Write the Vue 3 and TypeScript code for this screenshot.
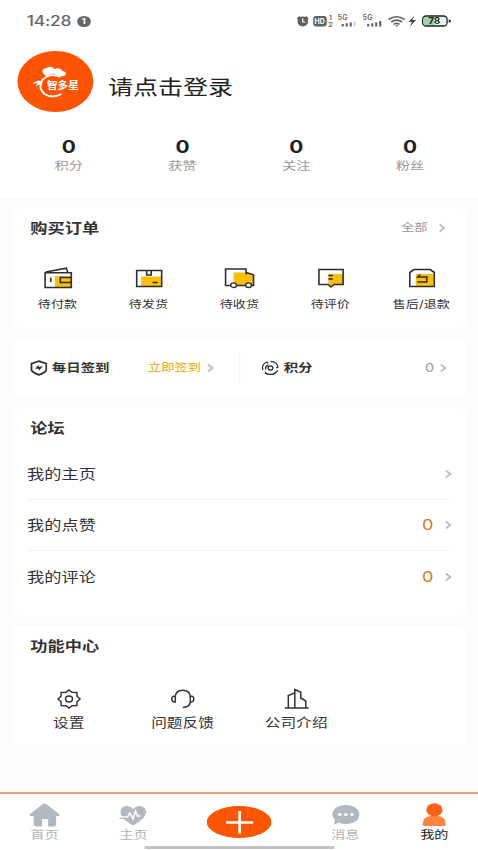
<script setup lang="ts">
interface Item { label: string; icon: string }

const stats: string[] = ['积分', '获赞', '关注', '粉丝']
const orders: Item[] = [
  { label: '待付款', icon: 'wallet' },
  { label: '待发货', icon: 'box' },
  { label: '待收货', icon: 'truck' },
  { label: '待评价', icon: 'comment' },
  { label: '售后/退款', icon: 'refund' },
]
const forum: { label: string; count?: number }[] = [
  { label: '我的主页' },
  { label: '我的点赞', count: 0 },
  { label: '我的评论', count: 0 },
]
const features: Item[] = [
  { label: '设置', icon: 'gear' },
  { label: '问题反馈', icon: 'headset' },
  { label: '公司介绍', icon: 'building' },
]
</script>

<template>
  <div class="screen">
    <header class="top">
      <div class="status">
        <span class="time">14:28</span>
        <span class="note">1</span>
        <div class="sys">
          <svg class="s-left" viewBox="0 0 31 16" preserveAspectRatio="none">
            <g fill="#606060">
              <ellipse cx="6.5" cy="8.5" rx="5.3" ry="5" />
              <path d="M.5 5.500 3 3l1.500 1.500L2 7zM12.500 5.500 10 3 8.500 4.500 11 7z" />
              <rect x="17" y="3" width="13.500" height="10.500" rx="3" />
            </g>
            <path d="M6.500 5.500v3.500h2.500" fill="none" stroke="#fff" stroke-width="1.200" />
            <text x="18.300" y="11.300" class="hd">HD</text>
          </svg>
          <div class="sims"><span>1</span><span>2</span></div>
          <svg class="s-right" viewBox="37 0 119 16" preserveAspectRatio="none">
            <text x="41" y="7" class="mini">5G</text>
            <text x="66" y="7" class="mini">5G</text>
            <g fill="#666">
              <path d="M45 11h2.200v2.500H45zM49 10.300h2.200v3.200H49zM53 9.500h2.200v4H53z" />
              <path d="M70.500 11h2.200v2.500h-2.200zM74.500 10.300h2.200v3.200h-2.200zM78.500 9.500h2.200v4h-2.200zM82.500 8h2.200v5.500h-2.200z" />
              <path d="M57 8h2v5.500h-2z" fill="#d8d8d8" />
            </g>
            <path d="M92 6.500q8-5.500 16 0M94.500 9q5.500-3.800 11 0M97 11.300q3-2 6 0" fill="none" stroke="#666" stroke-width="1.600" />
            <path d="M98.500 11.800h3.500L100.300 14z" fill="#666" />
            <path d="m118 2.500-6 6.500h3.500L113 14l6.500-7h-3.800z" fill="#444" />
            <rect x="126" y="3" width="24.500" height="10" rx="3.500" fill="#e5f3e8" stroke="#222" stroke-width="1.300" />
            <path d="M129 4h9v8h-9q-2 0-2-2V6q0-2 2-2z" fill="#9bd5a8" />
            <path d="M152 6.500q2.500 0 2.500 1.500T152 9.500z" fill="#333" />
            <text x="132" y="11.300" class="battery">78</text>
          </svg>
        </div>
      </div>

      <div class="profile">
        <div class="avatar">
          <svg viewBox="0 0 76 61" preserveAspectRatio="none">
            <path d="M26 23q-3-5 3-6 5-3 8 1 6-2 8 2 6 1 2 5-5 1-8-1-5-3-9 1-2 0-4-2z" fill="#fff" />
            <path d="M43 26Q32 21 25 29q-5 8 2 14 8 5 17 0" fill="none" stroke="#fff" stroke-width="1.800" />
            <path d="M25 31q-4-4-10 2l5-1-2 4q4-4 6-1z" fill="#fff" />
            <text x="29.500" y="38.300" class="brand" textLength="32" lengthAdjust="spacingAndGlyphs">智多星</text>
          </svg>
        </div>
        <h1>请点击登录</h1>
      </div>

      <div class="stats">
        <div v-for="s in stats" :key="s" class="stat">
          <b>0</b><span>{{ s }}</span>
        </div>
      </div>
    </header>

    <main>
      <section class="card orders">
        <div class="head">
          <h2>购买订单</h2>
          <span class="all">全部</span>
          <svg class="chev" viewBox="0 0 8 10" preserveAspectRatio="none"><path d="m1.500 1.500 4.500 3.500-4.500 3.500" /></svg>
        </div>
        <div class="grid">
          <div v-for="o in orders" :key="o.icon" class="order">
            <svg class="oicon" viewBox="0 0 32 24" preserveAspectRatio="none">
              <template v-if="o.icon === 'wallet'">
                <path class="y" d="M12.500 10H29v11.500H12.500z" />
                <path class="l" d="M2.800 6.700h26.200v14.800H2.800zM3.500 6 24 2.200l1.500 4.300M8.500 11.500v4.500M29 11.500H18v5h11" />
              </template>
              <template v-else-if="o.icon === 'box'">
                <path class="y" d="M8 10.500h20V20H8z" />
                <path class="l" d="M3.500 4.500h25V20.500h-25zM13.500 4.500V9h4.500V4.500M19.500 16.500h5" />
              </template>
              <template v-else-if="o.icon === 'truck'">
                <path class="y" d="M9.500 6.500h13.500l6.500 2v11.500h-20z" />
                <path class="l" d="M1.500 3h20.500v16.500H1.500zM22 6.500l7.500 2.300v10.700H22M22 8.500v3" />
                <path d="M21 8.500h2v10.200h-2z" class="fill" />
                <ellipse class="w" cx="9.500" cy="19.200" rx="2.900" ry="2.300" />
                <ellipse class="w" cx="24.500" cy="19.200" rx="2.900" ry="2.300" />
              </template>
              <template v-else-if="o.icon === 'comment'">
                <path class="y" d="M13.500 8H28v10.500h-9L16 21l-2.500-2z" />
                <path class="l" d="M4 3.500h24.200v15H19L16 21l-3-2.500H4zM13.500 9.500H18M13.500 13H18" />
              </template>
              <template v-else>
                <path class="y" d="M10 8h18v12.500H10z" />
                <path class="l" d="M4 20.500V6.500L8 3.500h16.500l4 3v14zM14.500 8.500 12 11h9v5h-9.500" />
              </template>
            </svg>
            <span>{{ o.label }}</span>
          </div>
        </div>
      </section>

      <section class="card sign">
        <div class="half first">
          <svg class="sicon" viewBox="0 0 18 16" preserveAspectRatio="none">
            <path d="M9 1.200 16.400 3.700v6.500Q14.500 13 9 14.800 3.500 13 1.600 10.200V3.700z" />
            <path d="M5 8.500 9 5v2l4-1-4 5V9z" fill="#333" />
          </svg>
          <b>每日签到</b>
          <span class="now">立即签到</span>
          <svg class="chev" viewBox="0 0 8 10" preserveAspectRatio="none"><path d="m1.500 1.500 4.500 3.500-4.500 3.500" /></svg>
        </div>
        <div class="half second">
          <svg class="sicon thin" viewBox="0 0 18 16" preserveAspectRatio="none">
            <ellipse cx="9" cy="8" rx="2.400" ry="2" />
            <path d="M1.500 10Q-.3 4.500 5.500 2l1 1.300M9 1.300q7 .5 7.500 6L14.500 8M16.300 10.500Q12 16.500 4 13.300l.5-1.500M4.300 9.500Q3.500 6 7 4.800" />
          </svg>
          <b>积分</b>
          <span class="points">0</span>
          <svg class="chev" viewBox="0 0 8 10" preserveAspectRatio="none"><path d="m1.500 1.500 4.500 3.500-4.500 3.500" /></svg>
        </div>
      </section>

      <section class="card forum">
        <div class="head"><h2>论坛</h2></div>
        <div v-for="f in forum" :key="f.label" class="row">
          <span class="name">{{ f.label }}</span>
          <span v-if="f.count !== undefined" class="count">{{ f.count }}</span>
          <svg class="chev" viewBox="0 0 8 10" preserveAspectRatio="none"><path d="m1.500 1.500 4.500 3.500-4.500 3.500" /></svg>
        </div>
      </section>

      <section class="card center">
        <div class="head"><h2>功能中心</h2></div>
        <div class="features">
          <div v-for="f in features" :key="f.icon" class="feature">
            <svg class="ficon" viewBox="0 0 26 22" preserveAspectRatio="none">
              <template v-if="f.icon === 'gear'">
                <path d="M13 2 16 4.300 20.800 4.500 21 8.200 24 11l-3 2.800-.2 3.700-4.800.2L13 20l-3-2.300-4.800-.2L5 13.800 2 11l3-2.800.2-3.700 4.800-.2z" />
                <ellipse cx="13" cy="11" rx="3.500" ry="2.900" />
              </template>
              <template v-else-if="f.icon === 'headset'">
                <path d="M6 14.500V9.500Q6 2.200 13.500 2.200T21 9.500v5Q20 19.200 13.500 19.500M6 8Q2.500 8 2.500 11T6 14.200M21 8q3.500 0 3.500 3T21 14.200" />
              </template>
              <template v-else>
                <path d="M1 20h24M4.500 20V7.500L11 4.800V20M11 4.800V1.500l6 2.700V10l5 3v7M17 10v1" />
              </template>
            </svg>
            <span>{{ f.label }}</span>
          </div>
        </div>
      </section>
    </main>

    <footer>
      <nav>
        <div class="tab">
          <svg class="ticon" viewBox="0 0 32 24" preserveAspectRatio="none">
            <path d="M16 .5q1 0 2 .8L30.500 11q1.500 2-1.500 2h-1.500v8q0 2.500-3 2.500H19.500V16h-6v7.500H8q-3 0-3-2.500v-8H3q-3 0-1.500-2L14 1.300q1-.8 2-.8z" fill="#b3b9c1" />
          </svg>
          <span>首页</span>
        </div>
        <div class="tab">
          <svg class="ticon" viewBox="0 0 32 24" preserveAspectRatio="none">
            <path d="M16 6Q13 2.500 9 3 3 4 3.500 10q1 6 12.500 12.500Q28 16 29 10q.5-6-6-7-4-.5-7 3z" fill="#b3b9c1" />
            <path d="M3 14h7.500l2.500-4 3 6 2.500-8 2 5h3" fill="none" stroke="#fff" stroke-width="1.500" />
            <path d="M2.500 15.300h7.500" stroke="#b3b9c1" stroke-width="1.200" />
          </svg>
          <span>主页</span>
        </div>
        <div class="tab publish">
          <svg viewBox="0 0 65 32" preserveAspectRatio="none">
            <ellipse cx="32.500" cy="16" rx="32.500" ry="16" fill="#fe5603" />
            <path d="M19.500 16.500h27M33 5v22.500" stroke="#fff" stroke-width="2.600" />
          </svg>
        </div>
        <div class="tab">
          <svg class="ticon" viewBox="0 0 32 24" preserveAspectRatio="none">
            <path d="M16 2c8 0 13.500 4 13.500 9.500S24 21 16 21q-4 0-7-1.200L4 21.500l1-4.500Q2.500 14.500 2.500 11.500C2.500 6 8 2 16 2z" fill="#b3b9c1" />
            <g fill="#fff"><ellipse cx="9.800" cy="11.500" rx="1.800" ry="1.500" /><ellipse cx="16" cy="11.500" rx="1.800" ry="1.500" /><ellipse cx="22.200" cy="11.500" rx="1.800" ry="1.500" /></g>
          </svg>
          <span>消息</span>
        </div>
        <div class="tab active">
          <svg class="ticon" viewBox="0 0 32 24" preserveAspectRatio="none">
            <path d="M4.500 22Q4 14 12 13h8.500Q28 14 27.500 22q0 1-2 1h-19q-2 0-2-1z" fill="#ff8540" />
            <ellipse cx="16.200" cy="6.800" rx="8.200" ry="6.600" fill="#fb6217" />
          </svg>
          <span>我的</span>
        </div>
      </nav>
      <div class="bar"></div>
    </footer>
  </div>
</template>

<style>
body {
  margin: 0;
  overflow: hidden;
  background: #fbfbfb;
}
</style>

<style scoped>
/* The layout is 384 units wide and stretched horizontally to fill the window. */
.screen {
  width: 384px;
  height: 850px;
  transform: scaleX(1.2448);
  transform-origin: 0 0;
  display: flex;
  flex-direction: column;
  overflow: hidden;
  box-sizing: border-box;
  background: #fbfbfb;
  color: #333;
  font-family: Inter, "Noto Sans CJK SC", sans-serif;
  white-space: nowrap;
}
svg { display: block; flex: none; }
h1, h2 { margin: 0; }
.top { height: 198px; background: #fff; flex: none; }
.status { display: flex; align-items: center; height: 42px; padding: 0 20.700px 0 21.500px; }
.time { width: 34.500px; font: 500 14px/20px Inter, sans-serif; color: #666; letter-spacing: -.2px; }
.note {
  width: 10.500px; height: 11px; margin-left: 6px; border-radius: 50%; background: #666;
  color: #fff; font: 700 8px/11px Inter, sans-serif; text-align: center;
}
.sys { display: flex; align-items: center; margin-left: auto; }
.s-left { width: 24.900px; height: 16px; }
.s-right { width: 95.600px; height: 16px; }
.sims { width: 4.800px; display: flex; flex-direction: column; align-items: center; }
.sims span { font: 600 6px/7px Inter, sans-serif; height: 7px; color: #666; }
.hd { font: 700 7px Inter, sans-serif; fill: #fff; }
.mini { font: 600 7px Inter, sans-serif; fill: #666; letter-spacing: .3px; }
.battery { font: 700 9.500px Inter, sans-serif; fill: #222; }
.profile { display: flex; align-items: center; height: 78px; padding-left: 13.500px; }
.avatar { width: 61px; height: 61px; border-radius: 50%; background: #fe5302; overflow: hidden; }
.avatar svg { width: 61px; height: 61px; }
.brand { font: 700 10px "Noto Sans CJK SC", sans-serif; fill: #fff; }
h1 { margin: 13px 0 0 12.300px; font-size: 20.100px; line-height: 28px; font-weight: 400; color: #222; }
.stats { display: flex; margin: 14.500px 9px 0 9.600px; }
.stat { flex: 1; display: flex; flex-direction: column; align-items: center; }
.stat b { font-size: 16.800px; line-height: 24px; color: #222; }
.stat span { font-size: 11.400px; line-height: 14px; color: #999; }
main { flex: 1; padding: 10px 9px 0 9.600px; display: flex; flex-direction: column; gap: 11px; }
.card { background: #fff; border-radius: 6px; box-sizing: border-box; flex: none; }
.head { display: flex; align-items: center; height: 40px; padding: 0 16.300px 0 14.800px; }
h2 { flex: 1; font-size: 13.800px; line-height: 20px; font-weight: 700; }
.chev { width: 6.400px; height: 10px; fill: none; stroke: #bbb; stroke-width: 1.600; }
.orders { height: 120px; }
.all { font-size: 10.600px; line-height: 16px; color: #999; margin-right: 9px; }
.grid { display: flex; margin-top: 18px; }
.order { flex: 1; display: flex; flex-direction: column; align-items: center; gap: 7px; }
.order span { font-size: 10.500px; line-height: 16px; }
.oicon { width: 25.700px; height: 24px; margin-left: .8px; }
.y { fill: #f9bf0b; }
.fill { fill: #f9bf0b; }
.l { fill: none; stroke: #2e2e35; stroke-width: 1.600; }
.w { fill: #fff; stroke: #2e2e35; stroke-width: 1.400; }
.sign { height: 58px; display: flex; align-items: center; }
.half { display: flex; align-items: center; height: 32px; box-sizing: border-box; }
.first { width: 183px; padding-left: 14px; border-right: 1px solid #f8f8f8; }
.second { flex: 1; padding: 0 15.500px 0 17.300px; }
.sicon { width: 14.500px; height: 16px; fill: none; stroke: #333; stroke-width: 1.800; }
.sicon path[fill] { stroke: none; }
.thin { stroke-width: 1.300; }
.half b { font-size: 11.600px; line-height: 18px; margin-left: 3.500px; font-weight: 700; }
.now { font-size: 10.600px; line-height: 16px; font-weight: 500; color: #e9b63c; margin: -1px 5px 0 31px; }
.points { margin-left: auto; margin-right: 4.500px; font-size: 11.500px; color: #999; }
.forum { height: 208px; }
.row { display: flex; align-items: center; height: 51.300px; box-sizing: border-box; margin: 0 12.700px 0 12.200px; padding-top: 1px; border-bottom: 1px solid #f3f3f3; }
.head + .row { height: 51.700px; }
.row:last-child { border-bottom: 0; }
.name { flex: 1; font-size: 13.800px; line-height: 20px; }
.count { font-size: 14.500px; line-height: 20px; color: #d9742e; margin-right: 8.500px; }
.row .chev { margin-right: -.7px; }
.center { height: 119px; margin-top: -1px; }
.features { display: grid; grid-template-columns: repeat(4, 1fr); margin-top: 21.500px; }
.feature { display: flex; flex-direction: column; align-items: center; gap: 4px; }
.feature span { font-size: 12.600px; line-height: 18px; }
.ficon { width: 20.900px; height: 22px; fill: none; stroke: #333; stroke-width: 1.500; }
footer { height: 58px; box-sizing: border-box; flex: none; border-top: 2px solid #eba17e; background: #fff; }
nav { display: flex; height: 52px; }
.tab { width: 71.500px; flex: none; padding-top: 9px; box-sizing: border-box; display: flex; flex-direction: column; align-items: center; color: #b5b5b5; }
.tab span { font-size: 11.300px; line-height: 16px; }
.ticon { width: 25.700px; height: 24px; }
.publish { width: 98.700px; padding-top: 12px; }
.publish svg { width: 52.200px; height: 32px; }
.active { color: #222; }
.bar { width: 153px; height: 3px; margin: 0 auto; border-radius: 2px; background: #c4c4c4; }
</style>
